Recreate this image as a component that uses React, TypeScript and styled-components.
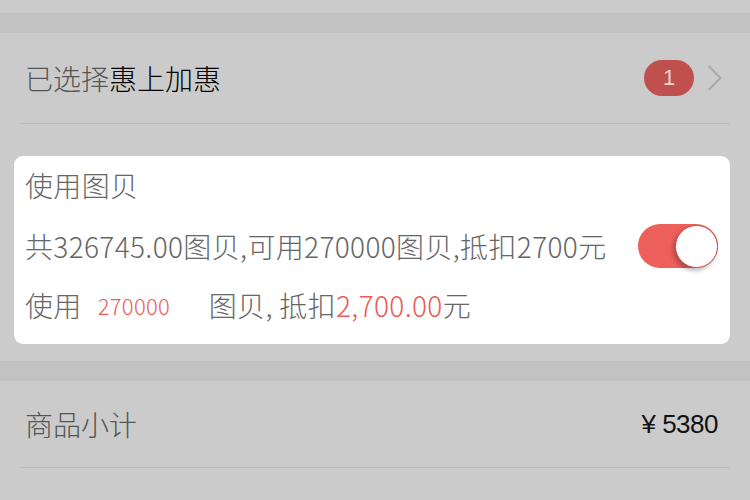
import React from 'react';
import styled, { createGlobalStyle } from 'styled-components';

const GlobalStyle = createGlobalStyle`
  html, body {
    margin: 0;
    padding: 0;
    background: #cbcbcb;
  }
  body {
    font-family: "Noto Sans CJK SC", "Noto Sans", sans-serif;
    -webkit-font-smoothing: antialiased;
  }
`;

const Page = styled.div`
  width: 750px;
  height: 500px;
  overflow: hidden;
  background: #cbcbcb;
  padding-top: 13px;
  box-sizing: border-box;
`;

const Band = styled.div`
  height: 20px;
  background: #c2c2c2;
`;

const Row = styled.div<{ $height: number }>`
  height: ${({ $height }) => $height}px;
  margin: 0 20px;
  padding: 0 8px 0 5px;
  display: flex;
  align-items: center;
  justify-content: space-between;
  border-bottom: 1px solid #bdbdbd;
`;

const Label = styled.span`
  font-size: 28px;
  font-weight: 300;
  color: #555;
`;

const Strong = styled.span`
  color: #000;
`;

const Right = styled.div`
  display: flex;
  align-items: center;
  gap: 13px;
`;

const Badge = styled.span`
  width: 50px;
  height: 36px;
  border-radius: 18px;
  background: #c0504d;
  color: #ecd3d2;
  font-family: "Liberation Sans", sans-serif;
  font-size: 22px;
  display: flex;
  align-items: center;
  justify-content: center;
`;

const Price = styled.span`
  font-family: "Liberation Sans", sans-serif;
  font-size: 26px;
  color: #111;
  letter-spacing: -0.5px;
  margin-right: 4px;
`;

const Gap = styled.div<{ $height: number }>`
  height: ${({ $height }) => $height}px;
`;

const Card = styled.div`
  margin: 0 20px 0 14px;
  background: #fff;
  border-radius: 9px;
  padding: 0 12px 12px 11px;
  height: 188px;
  box-sizing: border-box;
`;

const CardLine = styled.div<{ $height: number }>`
  height: ${({ $height }) => $height}px;
  display: flex;
  align-items: center;
  justify-content: space-between;
  font-size: 28px;
  font-weight: 300;
  letter-spacing: 0.35px;
  color: #666;
  white-space: nowrap;
`;

const Inline = styled.div`
  display: flex;
  align-items: center;
`;

const Red = styled.span`
  color: #ec5b57;
`;

const AmountInput = styled.span`
  width: 127px;
  box-sizing: border-box;
  padding-left: 16px;
  font-size: 22px;
  letter-spacing: 0.3px;
  color: #ec5b57;
`;

const Toggle = styled.div`
  width: 80px;
  height: 44px;
  border-radius: 22px;
  background: #ec5f5b;
  display: flex;
  align-items: center;
  justify-content: flex-end;
`;

const Knob = styled.div`
  width: 41px;
  height: 41px;
  border-radius: 50%;
  background: #fff;
  border: 1.5px solid #c9504c;
  box-shadow: -2px 3px 4px rgba(0, 0, 0, 0.25);
`;

const Chevron = () => (
  <svg width="15" height="28" viewBox="0 0 15 28" fill="none">
    <path d="M1.5 2 L13.5 14 L1.5 26" stroke="#a9a9a9" strokeWidth="2" />
  </svg>
);

export default function App() {
  return (
    <Page>
      <GlobalStyle />
      <Band />
      <Row $height={90}>
        <Label>
          已选择<Strong>惠上加惠</Strong>
        </Label>
        <Right>
          <Badge>1</Badge>
          <Chevron />
        </Right>
      </Row>
      <Gap $height={32} />
      <Card>
        <CardLine $height={58}>使用图贝</CardLine>
        <CardLine $height={64}>
          <span>共326745.00图贝,可用270000图贝,抵扣2700元</span>
          <Toggle>
            <Knob />
          </Toggle>
        </CardLine>
        <CardLine $height={54}>
          <Inline>
            <span>使用</span>
            <AmountInput>270000</AmountInput>
            <span>
              图贝, 抵扣<Red>2,700.00</Red>元
            </span>
          </Inline>
        </CardLine>
      </Card>
      <Gap $height={17} />
      <Band />
      <Row $height={86}>
        <Label>商品小计</Label>
        <Price>¥ 5380</Price>
      </Row>
    </Page>
  );
}
